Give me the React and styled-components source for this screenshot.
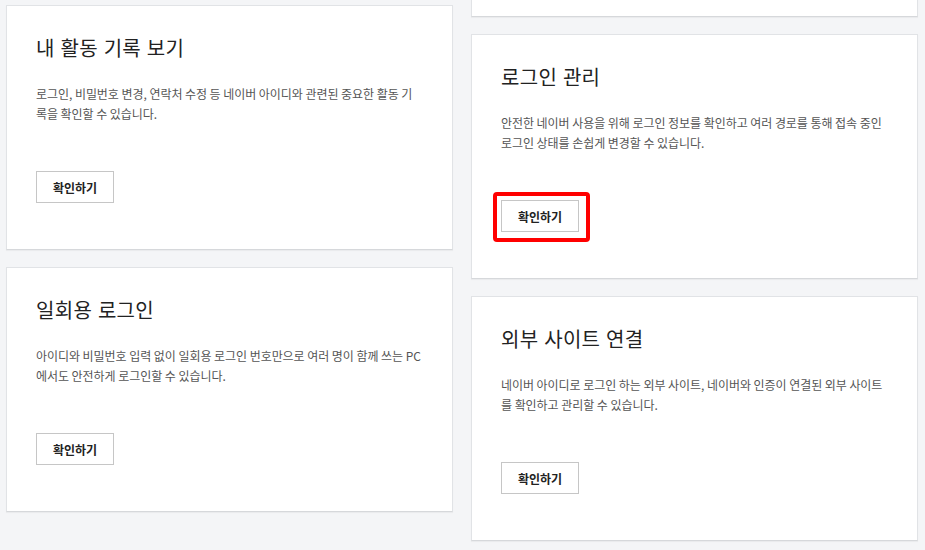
import React from "react";
import styled, { createGlobalStyle } from "styled-components";

const GlobalStyle = createGlobalStyle`
  html, body {
    margin: 0;
    padding: 0;
    background: #f4f5f7;
    font-family: "Noto Sans CJK KR", "Noto Sans", sans-serif;
    overflow: hidden;
  }
`;

const leftCards = [
  {
    title: "내 활동 기록 보기",
    desc: "로그인, 비밀번호 변경, 연락처 수정 등 네이버 아이디와 관련된 중요한 활동 기록을 확인할 수 있습니다.",
  },
  {
    title: "일회용 로그인",
    // zero-width space lets the line break between "PC" and "에서도"
    desc: "아이디와 비밀번호 입력 없이 일회용 로그인 번호만으로 여러 명이 함께 쓰는 PC\u200B에서도 안전하게 로그인할 수 있습니다.",
  },
];

const rightCards = [
  {
    title: "2단계 인증",
    desc: "",
  },
  {
    title: "로그인 관리",
    desc: "안전한 네이버 사용을 위해 로그인 정보를 확인하고 여러 경로를 통해 접속 중인 로그인 상태를 손쉽게 변경할 수 있습니다.",
    marked: true,
  },
  {
    title: "외부 사이트 연결",
    desc: "네이버 아이디로 로그인 하는 외부 사이트, 네이버와 인증이 연결된 외부 사이트를 확인하고 관리할 수 있습니다.",
  },
];

function App() {
  return (
    <>
      <GlobalStyle />
      <Page>
        <Column>
          {leftCards.map((card, index) => (
            <Card key={index} {...card} />
          ))}
        </Column>
        <Column $offset={-233}>
          {rightCards.map((card, index) => (
            <Card key={index} {...card} />
          ))}
        </Column>
      </Page>
    </>
  );
}

function Card({ title, desc, marked }) {
  return (
    <Box>
      <Title>{title}</Title>
      <Desc>{desc}</Desc>
      <ButtonWrap>
        <Button type='button'>확인하기</Button>
        {marked && <Highlight />}
      </ButtonWrap>
    </Box>
  );
}

const Page = styled.main`
  display: flex;
  align-items: flex-start;
  gap: 18px;
  padding: 5px 0 0 6px;
  height: 550px;
  box-sizing: border-box;
`;

const Column = styled.div`
  display: flex;
  flex-direction: column;
  gap: 17px;
  width: 447px;
  margin-top: ${(p) => p.$offset || 0}px;
`;

const Box = styled.section`
  box-sizing: border-box;
  height: 245px;
  padding: 28px 29px 0;
  background: #fff;
  border: 1px solid #e1e3e6;
  border-bottom-color: #d6d8db;
  box-shadow: 0 1px 1px rgba(0, 0, 0, 0.04);
`;

const Title = styled.h3`
  margin: 0;
  font-size: 20px;
  line-height: 28px;
  font-weight: 400;
  letter-spacing: 0.3px;
  word-spacing: 1px;
  color: #222;
`;

const Desc = styled.p`
  margin: 22px 0 0;
  height: 40px;
  font-size: 12px;
  line-height: 20px;
  letter-spacing: -0.05px;
  color: #555;
  word-break: normal;
`;

const ButtonWrap = styled.div`
  position: relative;
  display: inline-block;
  margin-top: 47px;
`;

const Button = styled.button`
  display: block;
  width: 78px;
  height: 32px;
  padding: 0;
  background: #fff;
  border: 1px solid #c6c6c6;
  font-family: inherit;
  font-size: 12px;
  font-weight: 700;
  color: #222;
  cursor: pointer;
`;

const Highlight = styled.span`
  position: absolute;
  top: -8px;
  left: -8px;
  right: -11px;
  bottom: -10px;
  border: 4px solid #ff0000;
  border-radius: 4px;
  pointer-events: none;
`;

export default App;
